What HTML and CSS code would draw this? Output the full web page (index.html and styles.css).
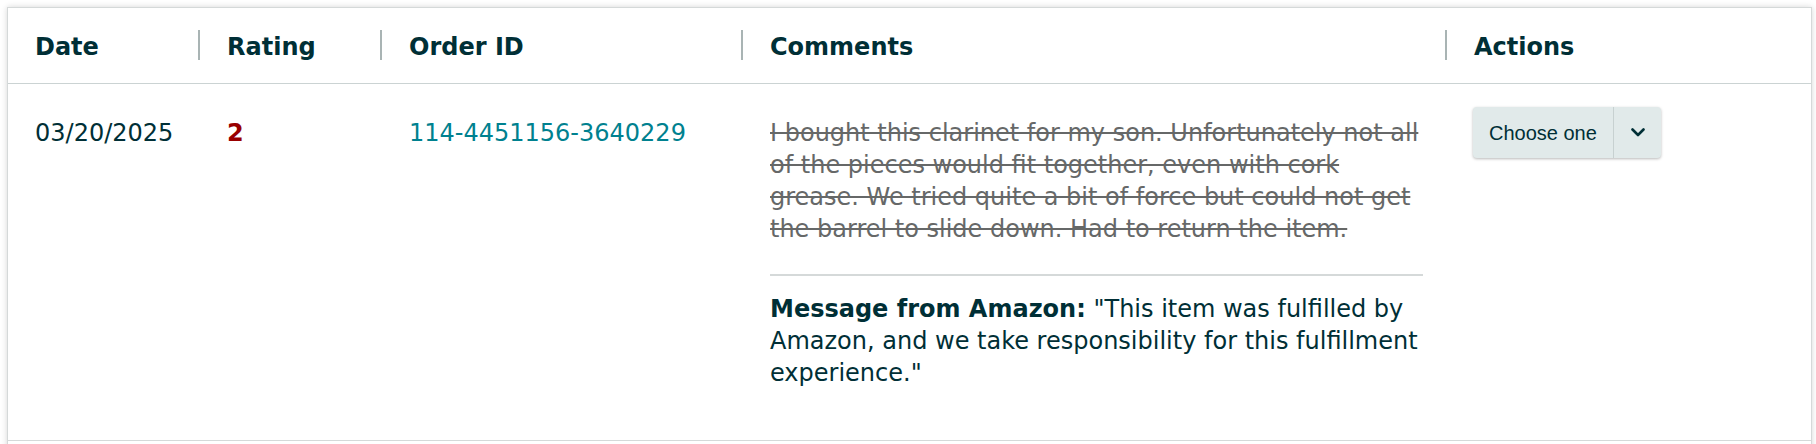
FILE: index.html
```html
<!DOCTYPE html>
<html lang="en">
<head>
<meta charset="utf-8">
<title>Feedback</title>
<link rel="stylesheet" href="styles.css">
</head>
<body>
<div class="card">
  <div class="grid head">
    <div class="th first"><span class="label">Date</span></div>
    <div class="th"><span class="sep"></span><span class="label">Rating</span></div>
    <div class="th"><span class="sep"></span><span class="label">Order ID</span></div>
    <div class="th"><span class="sep"></span><span class="label">Comments</span></div>
    <div class="th"><span class="sep"></span><span class="label">Actions</span></div>
  </div>
  <div class="grid row">
    <div class="td first">03/20/2025</div>
    <div class="td rating">2</div>
    <div class="td"><a class="order" href="#">114-4451156-3640229</a></div>
    <div class="td comments">
      <p class="comment">I bought this clarinet for my son. Unfortunately not all of the pieces would fit together, even with cork grease. We tried quite a bit of force but could not get the barrel to slide down. Had to return the item.</p>
      <div class="divider"></div>
      <p class="message"><strong>Message from Amazon:</strong> "This item was fulfilled by Amazon, and we take responsibility for this fulfillment experience."</p>
    </div>
    <div class="td actions">
      <div class="select">
        <span class="select-label">Choose one</span>
        <span class="select-caret">
          <svg width="14" height="9" viewBox="0 0 14 9"><polyline points="1.5,1.5 7,7 12.5,1.5" fill="none" stroke="#002f36" stroke-width="2.6" stroke-linecap="round" stroke-linejoin="round"/></svg>
        </span>
      </div>
    </div>
  </div>
</div>
</body>
</html>
```

FILE: styles.css
```css
html, body {
  margin: 0;
  background: #ffffff;
}
body {
  padding: 7px 4px 0 7px;
  font-family: "DejaVu Sans", Verdana, sans-serif;
  font-size: 24px;
  line-height: 32px;
  color: #002f36;
}
.card {
  border: 1px solid #d5d9d9;
  box-shadow: 0 0 6px rgba(0, 0, 0, 0.16);
  background: #ffffff;
  min-height: 460px;
}
.grid {
  display: grid;
  grid-template-columns: 190px 182px 361px 704px 1fr;
}
.head {
  border-bottom: 1px solid #cbd3d3;
}
.th {
  display: flex;
  align-items: center;
  height: 32px;
  padding: 23px 0 20px 0;
  font-weight: bold;
}
.th.first {
  padding-left: 27px;
}
.sep {
  flex: none;
  width: 2px;
  height: 30px;
  background: #a9b4b4;
  margin: -4px 27px 0 0;
}
.row {
  border-bottom: 1px solid #d5d9d9;
}
.td {
  padding: 33px 22px 51px 29px;
}
.td.first {
  padding-left: 27px;
}
.rating {
  color: #990000;
  font-weight: bold;
}
.order {
  color: #00818f;
  text-decoration: none;
}
.comment {
  margin: 0 0 29px 0;
  color: #666868;
  text-decoration: line-through;
}
.divider {
  height: 2px;
  background: #d5d9d9;
}
.message {
  margin: 17px 0 0 0;
}
.actions {
  padding-top: 23px;
  padding-left: 28px;
}
.select {
  display: inline-flex;
  height: 51px;
  background: #e1eaea;
  border-radius: 4px;
  box-shadow: 0 1px 3px rgba(0, 0, 0, 0.28);
  font-family: "Liberation Sans", Arial, sans-serif;
  font-size: 20px;
}
.select-label {
  display: flex;
  align-items: center;
  width: 141px;
  padding-left: 16px;
  box-sizing: border-box;
  border-right: 1px solid #c7d1d1;
}
.select-caret {
  display: flex;
  align-items: center;
  justify-content: center;
  width: 47px;
}
```
